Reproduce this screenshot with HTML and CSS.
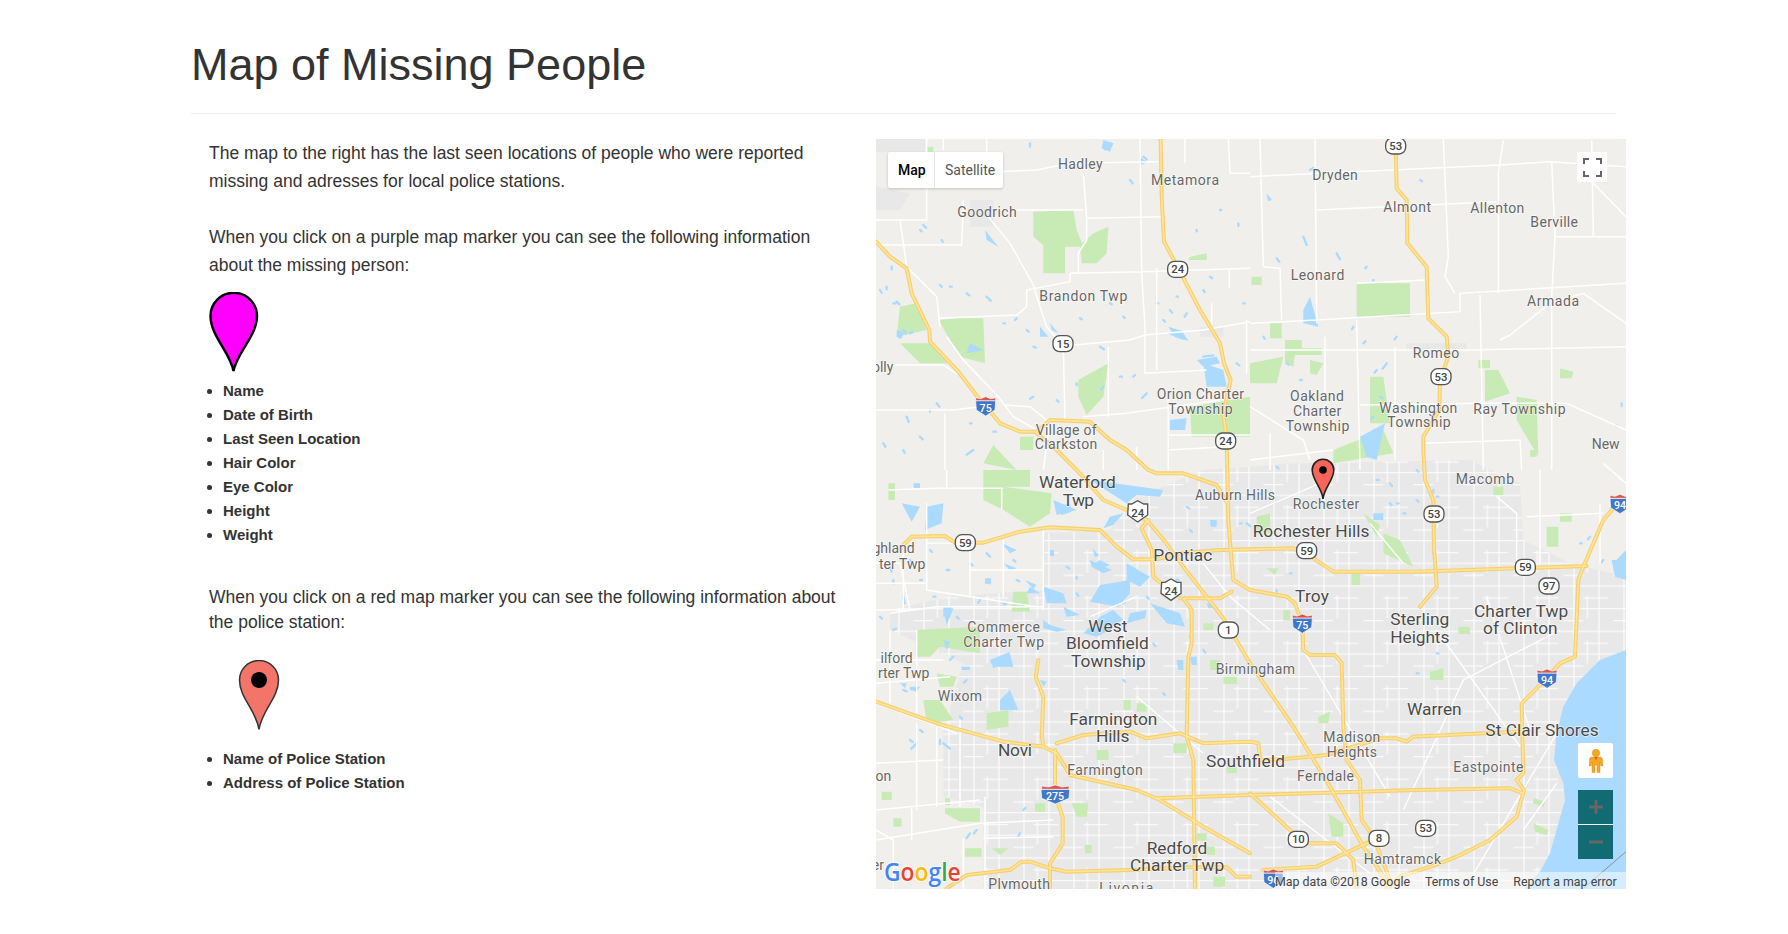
FILE: index.html
```html
<!DOCTYPE html>
<html lang="en">
<head>
<meta charset="utf-8">
<title>Map of Missing People</title>
<link rel="stylesheet" href="styles.css">
</head>
<body>
<header class="page-header"><h1>Map of Missing People</h1></header>
<main class="row">
<section class="intro">
<p class="para">The map to the right has the last seen locations of people who were reported missing and adresses for local police stations.</p>
<p class="para para-next">When you click on a purple map marker you can see the following information about the missing person:</p>
<svg class="pin-purple" viewBox="0 0 50 80"><path d="M24.500 79C21 60 1.500 44 1.500 24A23 23 0 0 1 48 24C48 44 28 60 24.500 79Z"/></svg>
<ul class="facts">
<li>Name</li><li>Date of Birth</li><li>Last Seen Location</li><li>Hair Color</li><li>Eye Color</li><li>Height</li><li>Weight</li>
</ul>
<p class="para para-tight">When you click on a red map marker you can see the following information about the police station:</p>
<svg class="pin-red" viewBox="0 0 42 70"><path class="pin-body" d="M21 69.500C18 50 1.500 38 1.500 20A19.500 19.500 0 0 1 40.500 20C40.500 38 24 50 21 69.500Z"/><circle cx="21" cy="20" r="8"/></svg>
<ul class="facts facts-police"><li>Name of Police Station</li><li>Address of Police Station</li></ul>
</section>
<section class="map">
<svg class="map-art" viewBox="18 27 2250 2250">
<defs>
<filter id="soft"><feGaussianBlur stdDeviation="1.600"/></filter>
<pattern id="grid" width="75" height="68" patternUnits="userSpaceOnUse"><path d="M0 8H75M12 0V68" class="grid-line"/></pattern>
<pattern id="grid2" width="150" height="136" patternUnits="userSpaceOnUse" x="40" y="36"><path d="M0 8H75M12 0V68M90 76H150" class="grid-line"/></pattern>
<clipPath id="urban-clip"><path id="urban-shape" d="M520 1210L720 1200 800 1100 1000 1020 1280 1000 1800 990 1950 1060 1960 1230 2100 1300 2268 1340V2280H340V2030L220 2000V1800L280 1600 60 1500V1440L230 1400 520 1380Z"/></clipPath>
<g id="highways">
<path d="M872 27L875 200 882 335 925 415 990 540 1050 640 1062 700 1082 750 1060 850 1070 933 1072 1020 1075 1170 1082 1260 1090 1350 1140 1380 1250 1400 1275 1420 1297 1480 1300 1560 1320 1575 1395 1575 1415 1600 1420 1790 1430 1890 1470 1950 1475 2070 1510 2120 1560 2250"/>
<path d="M1577 48L1580 175 1610 210 1612 340 1670 410 1675 565 1730 620 1735 680 1710 750 1708 840 1660 920 1660 960 1665 1050 1690 1110 1692 1260 1695 1290 1700 1370 1650 1430"/>
<path d="M18 335L60 380 110 415 125 490 178 600 180 635 265 725 330 810 347 828 390 880 450 905 500 905 540 870 660 875 720 930 770 960 835 1020 860 1030 940 1030 1040 1065 1072 1120"/>
<path d="M495 905L560 960 620 1020 700 1110 770 1140 830 1170 885 1235 940 1310 1060 1465 1140 1600 1270 1790 1380 1970 1480 2150 1560 2270"/>
<path d="M100 1245L125 1220 225 1218 255 1238 340 1238 400 1220 450 1205 540 1192 690 1200 740 1250 790 1288 860 1288 930 1270 1050 1260 1140 1258 1270 1255 1330 1285 1390 1325 1640 1325 1940 1315 2150 1308"/>
<path d="M835 1170L815 1195 845 1260 850 1340 880 1365M930 1405L1050 1405 1085 1385M940 1405L965 1440 965 1540 955 1580 950 1820 970 1890 975 2277"/>
<path d="M505 1590L497 1640 520 1700 515 1820 520 1845M555 1860L555 1995 578 2060 578 2140 540 2200 540 2277"/>
<path d="M18 1715L200 1780 400 1835 520 1850 560 1870 600 1935 800 1980 870 2010 1000 2090 1140 2170"/>
<path d="M560 1840L640 1815 780 1805 830 1825 930 1810 1000 1840 1140 1835 1165 1840 1170 1890 1245 1887 1370 1875 1530 1825 1580 1825 1610 1835 1630 1820 1840 1810 1960 1805"/>
<path d="M860 2005L1140 1995 1640 1980 1920 1975 1960 1990"/>
<path d="M2230 1135L2200 1170 2140 1310 2125 1350 2115 1580 2070 1600 2030 1645 1955 1720 1960 1930 1940 1950 1962 1980 1940 2060 1860 2130 1760 2180 1710 2200 1590 2240 1550 2275"/>
<path d="M1140 1990L1260 2100 1315 2140 1400 2140 1450 2190 1460 2275M1180 2220L1340 2210 1500 2135"/>
<path d="M230 2275L290 2235 420 2220 455 2195 480 2195 540 2215 590 2225 780 2220 970 2212 1070 2212 1100 2240 1140 2240"/>
</g>
</defs>
<g filter="url(#soft)">
<rect class="land" x="18" y="27" width="2250" height="2250"/>
<use href="#urban-shape" class="urban"/>
<rect x="18" y="27" width="2250" height="2250" fill="url(#grid)" clip-path="url(#urban-clip)"/>
<rect x="18" y="27" width="2250" height="2250" fill="url(#grid2)" clip-path="url(#urban-clip)"/>
<path class="urban" d="M18 27H165V65H18ZM18 170L120 190 90 240 18 240ZM300 210H370V290H300ZM990 590H1060V620H990ZM1610 640H1790V660H1610Z"/>
<g class="green">
<path d="M490 245L610 240 620 300 640 350 585 350 585 430 520 430 520 345 490 320ZM630 345L670 310 715 290 710 370 680 400 635 400ZM260 565H340L345 700 270 680 205 570ZM90 530L140 520 170 600 80 620ZM90 640H180L240 700 150 700ZM625 750L715 700 700 800 650 855 625 800ZM960 380L1010 370V390H955ZM960 830L1140 800V920H965ZM450 920H490V960H450ZM340 1000L370 945 440 1020ZM170 50H190V65H170Z"/>
<path d="M1460 460H1620V560H1460ZM1245 630H1295V655H1355V675H1275L1270 710 1245 700ZM1140 700L1240 680 1220 760H1140ZM1500 740H1540L1560 880H1500ZM1845 720H1885L1920 790 1845 815ZM1940 800L2000 810 2005 980 1940 870ZM1390 960L1540 900 1570 970 1390 1000ZM2070 715L2110 725 2105 745H2070ZM1200 580H1235V625H1200ZM1145 440H1175V465H1145ZM1320 690L1360 700 1340 735 1320 730ZM1825 690H1860V715H1825Z"/>
<path d="M340 1020H480V1070H400L545 1090 540 1150 480 1190 400 1140 340 1110ZM430 1385H470L480 1445H425ZM140 1500L330 1490V1570L210 1550 180 1580H140ZM200 1630L260 1640 250 1670H210ZM160 1710H210L250 1770 170 1780ZM350 1750L415 1740V1790L350 1800ZM55 1060H75V1110H55Z"/>
<path d="M1540 1210L1590 1230 1630 1310 1540 1270ZM2070 1150H2105V1175H2070ZM2030 1190H2065V1250H2030ZM1870 1070H1900V1095H1870ZM1980 960H2000V980H1980ZM1160 1160L1200 1150V1210H1160ZM1480 1150L1530 1185 1520 1220Z"/>
<path d="M1680 1625L1720 1615V1650H1680ZM1765 1490H1800V1512H1765ZM1990 2080L2035 2100 2030 2115 1995 2105ZM1990 2005L2025 2015 2020 2030 1990 2020ZM1345 1760L1380 1745 1375 1780H1345ZM1375 2050L1420 2080V2120H1385ZM1445 1330H1470V1365H1445ZM1190 1315H1225L1215 1335Z"/>
<path d="M225 2035H330V2075H270L225 2050ZM70 2065H95V2090H70ZM645 2145H665V2170H645ZM605 2020H655L650 2060H620ZM285 2155H335V2180H285ZM365 2155H415L390 2175ZM495 2020H525V2045H495ZM35 1985H65V2010H35ZM225 2005H240V2025H225Z"/>
<path d="M1000 1480h30v20h-30ZM1060 1640h40v22h-40ZM1240 1440h20v30h-20ZM1020 1590h30v30h-30ZM800 1720h30v25h-30ZM680 1860h35v30h-35ZM910 1840h40v30h-40ZM760 1710h22v30h-22ZM1010 2150h25v25h-25ZM980 2110h30v22h-30ZM1030 2240h35v30h-35ZM1070 1910h30v20h-30Z"/>
</g>
<g class="water">
<path d="M520 1370L580 1390 590 1420H530ZM660 1290L725 1320 700 1330 665 1310ZM770 1300L840 1340 810 1370 770 1350ZM690 1365L780 1350V1390L745 1430 660 1415ZM580 1430L630 1455 590 1460ZM730 1440L760 1470 700 1500 640 1510 690 1460ZM780 1450L830 1440 825 1465 770 1480ZM840 1420L930 1450 945 1490 890 1480ZM390 1710L420 1680 445 1740H390ZM365 1590L420 1570 430 1610 380 1610ZM480 1370L510 1390H470ZM170 1130L220 1120 215 1180 165 1200ZM95 1120L150 1130 125 1175ZM395 1240L440 1260 420 1270ZM550 1110L620 1140 560 1155ZM660 1050L880 1080 870 1100 800 1095 770 1120ZM220 1440L250 1435 230 1485Z"/>
<path d="M540 1260h12v18h-12ZM668 1255l20 22-14 4ZM690 1290l30 15-25 10-20-15ZM400 1300l40 15-20 6ZM465 1350l35 15-10 12ZM345 1345h18v16h-18ZM520 1470l20 15 50 15-30 5-40-10ZM640 1510l60-20 30 5-50 25ZM360 1590l60-25-10 30-40 20ZM275 1610h25v10h-25ZM510 1650l20 5-10 15ZM920 1590h20v30h-15ZM960 1580h20v25h-15ZM1010 1420h20v15h-15ZM1020 1170h20v20h-18ZM720 1160l40-10-30 35-30 10ZM560 1130l40-10 5 25-30 10ZM130 1060h20v15h-18ZM220 1530l20 5-10 25ZM90 1660h20l-5 15ZM120 1670h30l-10 15-20-5ZM220 1430h25l-5 30h-20Z"/>
<path d="M345 300L385 350 350 330ZM510 590L535 620H510ZM540 580L565 610 545 600ZM1000 700L1060 720 1070 770H1010ZM900 870L950 865 945 900H900ZM300 640L340 660 290 670ZM1300 540L1320 500 1345 590 1300 580ZM1470 920L1545 880 1520 990 1490 980ZM1510 1150H1540V1170H1510ZM895 590l40 12 20 30-40-10ZM980 690l60-10 10 20-50 10ZM700 30l30 10-10 25-25-10ZM810 80l20 15-15 10ZM1190 190l16 20-12 4ZM80 600l22 8-10 20-12-8Z"/>
<path class="specks" d="M480 40v10M720 40l-15 18M820 80l10 8M780 150l8 10M1050 240h4M160 285l8 8M215 330l3 5M65 410v8M210 465l5 5M50 470v8M350 500l12 12M80 515l8 8M630 565l5 3M440 565l-5 5M490 650l8 3M690 650l12 8M100 600l8 10M120 610l8-4M200 820l8 10M490 800l-10 6M830 790l-14 14M790 740l5-5M750 740h6M700 770l-6 8M40 940l6 10M110 860l6 16M310 960l-20 14M370 905h8M900 610l40 16M1000 680l30-4M900 540l6 8M950 550l-6 10M1100 700l8 6M1020 440l6 4M1105 280v8M980 300v4M1300 320l10 25M1400 370l10 18M1220 385l8 10M1320 120l10-6M1490 410l-4 5M1510 450v4M1450 590l-4 8M1550 700l-12 16M1580 620l-6 8M1650 150l6 4M2255 820v8M2235 885l8 3M1560 1060l6 8M1640 1110l5 5M1690 1080v8M1130 1180l10 8M60 1310l5 15M100 1400l4 20M230 1320h8M350 1350l8 10M440 1350l8 4M360 1500l8 6M250 1580l-10 10M100 1680l10 4M140 1840l-16 16M220 1840l20 16M210 1830v12M300 2110l-10 14M320 2100l-8 10M460 2040l6-6M450 2110l-6 10M1640 1630h6M1700 1570h6"/>
<path class="specks" d="M30 480l5 8M70 520h6M150 300l5 4M240 470h5M290 490l8 6M400 580h5M470 600l6 5M300 880h5M150 920l8 8M100 960l4 8M180 840v5M620 760v6M560 810l5 5M760 560l4 4M720 520l5 3M860 520h5M880 570l5 5M920 500h4M1000 480l4 6M1120 520h5M1180 620l4 6M1250 700l6 4M1290 750h6M1480 640l6-6M1520 720l-6 8M1530 800l8 4M1510 860l-6 6M1640 1020l5 5M1700 1100h5M1520 1050h6M1560 1120l5 5M1600 1150h6M1220 1010l5 5M1170 1090l6 4M1110 1180h5M950 1130l8 6M960 1200l6 6M120 1290l8 8M180 1260l6 6M300 1300l8 6M350 1270l10 10M430 1290l6 5M70 1350v10M150 1350h6M190 1400h6M260 1460l6 6M330 1410l-5 8M400 1420l8 3M440 1420h6M30 1460l6 6M70 1500l8-4M320 1690l8 4M290 1650l-8 8M620 1340v6M620 1390l5 8M590 1310l8 6M900 1360l8 4M830 1400l6 6M760 1420l6-4M920 1350h6M850 1540l6 8M960 1520l5 6M1000 1560l6 8M800 1620h6M760 1650l5 5M880 1690l5 5M1220 1380v5M1260 1330h5M1580 1120h6M2160 1220l-6 8M2130 1240h5M2200 1290l-5 6M150 1800l8 6M190 1780l8 6M120 1830l8 6M270 1760l6 6"/>
</g>
<path class="rural" d="M18 345H275L280 210M170 27V270H18M380 125L500 120 600 100 865 95M380 240H640M650 265L880 260M640 130L650 265V330L625 370V430M355 260L420 340 490 465 510 530 530 590 560 625 580 640M580 660L585 870M600 430V455L470 480V530L440 555 205 565M600 430L815 425 1140 415M810 27L815 430 825 590V730L1010 720M610 645L780 630 825 615 1000 600 1140 575M715 650V860M18 705H220L265 735M230 620L280 690 385 800 430 860 500 900M90 270L110 410 200 500 210 590M18 840H250L330 830M225 850V1020M400 825L480 830 530 870M640 860L770 850 1050 810M945 27V100M1075 27L1080 130H1140M860 415V720M1025 520V600M1078 415V475M220 27V60M350 27V125M800 950V1020M895 800V1020M700 1020V960M895 915H1140M895 960L1070 950M1130 570V730M540 870L520 1020"/>
<path class="rural" d="M1170 27L1180 410M1335 27L1340 580M1140 140L1890 105 2040 95 2268 110M1340 240L1880 215M1180 410L1230 415 1235 570M1140 580L1340 570 1770 545V490L2268 460M1720 27L1735 380 1725 440 1755 490M1885 215V490M1900 30L1885 130V215M2045 95L2055 320 2045 500V1020M2055 320H2268M2165 30L2170 320M2170 160L2268 260M1830 495L1840 1020M1460 460L1670 450M1890 630L1920 615 2040 520 2140 490 2268 580M1140 660H1800L2268 650M1365 620V800M1460 570L1470 1020M1575 650V990M1140 830L1300 930 1320 990M1470 825L1840 820 2090 820 2268 900M1660 940L1950 930 1955 1020M1200 910V1020M1140 990L1390 960"/>
<path class="rural" d="M55 1080L200 1075H400M170 1120V1380L500 1430M230 1020V1075M395 1075V1140M520 1200V1440M60 1450L200 1430H520M18 1720L260 1810M18 1440H120M270 1770V2030M18 2040L330 2010M18 2130L330 2080 550 2070M18 2100L70 2130V2277M125 2035V2130M18 1300L90 1300 120 1440M280 2125V2277M345 2000V2277M340 2125L550 2120M1970 1160L2200 1150M2010 1020V1300M2190 1120V1300M1880 1100L1940 1150V1300M2200 1000L2268 1060M100 1270V1440M300 1240V1400M400 1230V1400M170 1240H300M18 1360H170M300 1320H520M60 1500V1720M140 1500V1750M18 1590H220M18 1660L240 1640M140 1780V2040M200 1790V2030M18 1900L220 1890"/>
<path class="diag" d="M1140 1150L1350 1060 1400 1020M1500 1180L1600 1300M1850 1400L1980 1800M1700 1500L1950 1850M1600 2040L1780 1650 2070 1500M1800 2250L2060 1810M1960 2100L2060 1960M1300 1560L1560 2000M1200 2000L1500 2230M1200 1500L1080 1400 1000 1300M800 1700L1000 1870M800 1400L660 1460"/>
<path class="lake" d="M2268 1560L2190 1590 2120 1660 2080 1730 2060 1810 2052 1890 2080 1960 2085 2010 2040 2170 2010 2225 1960 2280H2268ZM2225 1290L2235 1340 2268 1350V1290ZM2268 1260L2230 1300 2240 1320 2268 1320Z"/>
<use href="#highways" class="hw-case"/>
<use href="#highways" class="hw-core"/>
</g>

<g class="labels">
<text x="564" y="118" textLength="134">Hadley</text>
<text x="843" y="166" textLength="204">Metamora</text>
<text x="262" y="260" textLength="178">Goodrich</text>
<text x="508" y="512" textLength="264">Brandon Twp</text>
<text x="70" y="725" text-anchor="end">olly</text>
<text x="860" y="807" textLength="262">Orion Charter</text>
<text x="895" y="852" textLength="193">Township</text>
<text x="497" y="914" textLength="183">Village of</text>
<text x="494" y="958" textLength="188">Clarkston</text>
<text x="1327" y="150" textLength="136">Dryden</text>
<text x="1540" y="246" textLength="143">Almont</text>
<text x="1801" y="250" textLength="162">Allenton</text>
<text x="1981" y="290" textLength="143">Berville</text>
<text x="1262" y="450" textLength="161">Leonard</text>
<text x="1971" y="528" textLength="156">Armada</text>
<text x="1628" y="684" textLength="140">Romeo</text>
<text x="1260" y="812" textLength="162">Oakland</text>
<text x="1269" y="857" textLength="145">Charter</text>
<text x="1247" y="902" textLength="191">Township</text>
<text x="1528" y="848" textLength="234">Washington</text>
<text x="1552" y="892" textLength="190">Township</text>
<text x="1810" y="852" textLength="277">Ray Township</text>
<text x="2165" y="956">New</text>
<text x="1757" y="1062" textLength="175">Macomb</text>
<text x="1268" y="1136" textLength="200">Rochester</text>
<text x="975" y="1110" textLength="240">Auburn Hills</text>
<text x="134" y="1270" text-anchor="end">ghland</text>
<text x="166" y="1317" text-anchor="end">ter Twp</text>
<text x="292" y="1507" textLength="218">Commerce</text>
<text x="280" y="1552" textLength="242">Charter Twp</text>
<text x="1037" y="1632" textLength="238">Birmingham</text>
<text x="128" y="1600" text-anchor="end">ilford</text>
<text x="178" y="1644" text-anchor="end">rter Twp</text>
<text x="203" y="1714" textLength="133">Wixom</text>
<text x="592" y="1936" textLength="226">Farmington</text>
<text x="64" y="1952" text-anchor="end">on</text>
<text x="1360" y="1836" textLength="171">Madison</text>
<text x="1370" y="1882" textLength="151">Heights</text>
<text x="1281" y="1953" textLength="171">Ferndale</text>
<text x="1750" y="1926" textLength="210">Eastpointe</text>
<text x="1481" y="2202" textLength="232">Hamtramck</text>
<text x="355" y="2278" textLength="185">Plymouth</text>
<text x="688" y="2290" textLength="162">Livonia</text>
<text x="42" y="2220" text-anchor="end">er</text>
</g>
<g class="labels labels-big">
<text x="507" y="1075" textLength="230">Waterford</text>
<text x="578" y="1128" textLength="94">Twp</text>
<text x="850" y="1293" textLength="177">Pontiac</text>
<text x="1148" y="1220" textLength="350">Rochester Hills</text>
<text x="655" y="1505" textLength="117">West</text>
<text x="588" y="1558" textLength="248">Bloomfield</text>
<text x="603" y="1610" textLength="224">Township</text>
<text x="598" y="1785" textLength="264">Farmington</text>
<text x="678" y="1837" textLength="100">Hills</text>
<text x="384" y="1878" textLength="102">Novi</text>
<text x="1008" y="1910" textLength="237">Southfield</text>
<text x="830" y="2172" textLength="182">Redford</text>
<text x="780" y="2224" textLength="283">Charter Twp</text>
<text x="1275" y="1415" textLength="102">Troy</text>
<text x="1561" y="1485" textLength="177">Sterling</text>
<text x="1561" y="1538" textLength="177">Heights</text>
<text x="1812" y="1460" textLength="283">Charter Twp</text>
<text x="1839" y="1513" textLength="224">of Clinton</text>
<text x="1611" y="1756" textLength="164">Warren</text>
<text x="1846" y="1818" textLength="340">St Clair Shores</text>
</g>

<g class="shields">
<g class="state"><rect x="893" y="394" width="60" height="48" rx="20"/><text x="923" y="430">24</text></g>
<g class="state"><rect x="549" y="617" width="60" height="48" rx="20"/><text x="579" y="653">15</text></g>
<g class="state"><rect x="1037" y="909" width="60" height="48" rx="20"/><text x="1067" y="945">24</text></g>
<g class="state"><rect x="1547" y="24" width="60" height="48" rx="20"/><text x="1577" y="60">53</text></g>
<g class="state"><rect x="1683" y="716" width="60" height="48" rx="20"/><text x="1713" y="752">53</text></g>
<g class="state"><rect x="1662" y="1128" width="60" height="48" rx="20"/><text x="1692" y="1164">53</text></g>
<g class="state"><rect x="1280" y="1238" width="60" height="48" rx="20"/><text x="1310" y="1274">59</text></g>
<g class="state"><rect x="1936" y="1288" width="60" height="48" rx="20"/><text x="1966" y="1324">59</text></g>
<g class="state"><rect x="256" y="1214" width="60" height="48" rx="20"/><text x="286" y="1250">59</text></g>
<g class="state"><rect x="1045" y="1476" width="60" height="48" rx="20"/><text x="1075" y="1512">1</text></g>
<g class="state"><rect x="2007" y="1344" width="60" height="48" rx="20"/><text x="2037" y="1380">97</text></g>
<g class="state"><rect x="1255" y="2104" width="60" height="48" rx="20"/><text x="1285" y="2140">10</text></g>
<g class="state"><rect x="1497" y="2101" width="60" height="48" rx="20"/><text x="1527" y="2137">8</text></g>
<g class="state"><rect x="1637" y="2071" width="60" height="48" rx="20"/><text x="1667" y="2107">53</text></g>
<g class="state"><path d="M775 1122L785 1122 803 1112 821 1122 833 1122 833 1155 803 1176 773 1155Z"/><text x="803" y="1160">24</text></g>
<g class="state"><path d="M875 1357L885 1357 903 1347 921 1357 933 1357 933 1390 903 1411 873 1390Z"/><text x="903" y="1395">24</text></g>
<g class="inter"><path class="i-blue" d="M317 812H377L375 840 347 858 319 840Z"/><path class="i-red" d="M317 812L317 803 332 806 347 800 362 806 377 803V812Z"/><text x="347" y="845">75</text></g>
<g class="inter"><path class="i-blue" d="M513 1978H599L597 2005 556 2022 515 2005Z"/><path class="i-red" d="M515 1978V1968L535 1971 556 1965 577 1971 597 1968V1978Z"/><text x="555" y="2011">275</text></g>
<g class="inter"><path class="i-blue" d="M1267 1464H1327L1325 1492 1297 1510 1269 1492Z"/><path class="i-red" d="M1267 1464V1455L1282 1458 1297 1452 1312 1458 1327 1455V1464Z"/><text x="1297" y="1497">75</text></g>
<g class="inter"><path class="i-blue" d="M2001 1629H2061L2059 1657 2031 1675 2003 1657Z"/><path class="i-red" d="M2001 1629V1620L2016 1623 2031 1617 2046 1623 2061 1620V1629Z"/><text x="2031" y="1662">94</text></g>
<g class="inter"><path class="i-blue" d="M2220 1105H2280L2278 1133 2250 1151 2222 1133Z"/><path class="i-red" d="M2220 1105V1096L2235 1099 2250 1093 2265 1099 2280 1096V1105Z"/><text x="2250" y="1138">94</text></g>
<g class="inter"><path class="i-blue" d="M1180 2229H1240L1238 2257 1210 2275 1182 2257Z"/><path class="i-red" d="M1180 2229V2220L1195 2223 1210 2217 1225 2223 1240 2220V2229Z"/><text x="1210" y="2262">96</text></g>
</g>
<g class="google">
<text x="42" y="2252" textLength="230" lengthAdjust="spacingAndGlyphs"><tspan class="g-b">G</tspan><tspan class="g-r">o</tspan><tspan class="g-y">o</tspan><tspan class="g-b">g</tspan><tspan class="g-g">l</tspan><tspan class="g-r">e</tspan></text>
</g>
<path class="cable" d="M2268 2165L2140 2275"/>
</svg>

<svg class="marker" viewBox="0 0 24 42"><path d="M12 41C11 30 1.200 22 1.200 12A10.800 10.800 0 0 1 22.800 12C22.800 22 13 30 12 41Z"/><circle cx="12" cy="12" r="3.800"/></svg>

<div class="map-type">
<span class="type-btn type-active">Map</span><span class="type-btn">Satellite</span>
</div>
<div class="fullscreen"><svg viewBox="0 0 19 19" class="fs-icon"><path d="M1 6V1H6M13 1H18V6M18 13V18H13M6 18H1V13"/></svg></div>
<div class="pegman"><svg viewBox="0 0 14 24" class="peg-icon"><circle class="peg" cx="7" cy="4" r="3.800"/><path class="peg" d="M3 8H11C12.500 8 13.500 9 13.500 10.500L14 17H12L11 13V23.500H8V16H6V23.500H3V13L2 17H0L.5 10.500C.5 9 1.500 8 3 8Z"/><path class="peg-tie" d="M5.500 8H8.500L7 11.500Z"/></svg></div>
<div class="zoom-ctl">
<div class="zoom-btn"><svg viewBox="0 0 14 14" class="zoom-icon"><path d="M7 0V14M0 7H14"/></svg></div>
<div class="zoom-btn"><svg viewBox="0 0 14 14" class="zoom-icon"><path d="M0 7H14"/></svg></div>
</div>
<div class="attribution"><span>Map data ©2018 Google</span><span>Terms of Use</span><span>Report a map error</span></div>
</section>
</main>
</body>
</html>
```
FILE: styles.css
```css
* { box-sizing: border-box; }
html, body { margin: 0; padding: 0; background: #fff; }
body { font-family: "Liberation Sans", Arial, sans-serif; color: #333; height: 934px; overflow: hidden; }

.page-header { margin-left: 191px; width: 1425px; height: 114px; border-bottom: 1px solid #eee; padding-top: 40px; }
h1 { margin: 0; font-size: 45px; line-height: 50px; font-weight: 400; color: #333; }

.row { display: flex; margin-top: 25px; padding-left: 209px; }
.intro { width: 667px; flex: none; padding-right: 22px; }
.para { margin: 0; font-size: 17.500px; line-height: 28px; }
.para-next { margin-top: 28px; }
.para-tight { margin-top: 38px; line-height: 25px; }

.pin-purple { display: block; width: 50px; height: 80px; margin-top: 13px; }
.pin-purple path { fill: #f0f; stroke: #000; stroke-width: 2.400; }
.pin-red { display: block; width: 42px; height: 70px; margin: 25px 0 0 29px; }
.pin-body { fill: #f37468; stroke: #333; stroke-width: 1.500; }

.facts { margin: 7px 0 0; padding: 0 0 0 14px; font-size: 15px; font-weight: 700; line-height: 24px; }
.facts-police { margin-top: 17px; }

.map { position: relative; width: 750px; height: 750px; flex: none; overflow: hidden; font-family: Roboto, sans-serif; }
.map-art { display: block; width: 750px; height: 750px; }

.land { fill: #f0efeb; }
.urban { fill: #e8e8e8; }
.grid-line { fill: none; stroke: #fff; stroke-width: 3; }
.green path { fill: #c8eab4; }
.water path, .lake { fill: #aadaff; }
.water .specks { fill: none; stroke: #aadaff; stroke-width: 7; stroke-linecap: round; }
.rural { fill: none; stroke: #fff; stroke-width: 4.500; }
.diag { fill: none; stroke: #fff; stroke-width: 4; }
.cable { fill: none; stroke: #8f8f8f; stroke-width: 3; }
.hw-case, .hw-core { fill: none; stroke-linejoin: round; stroke-linecap: round; }
.hw-case { stroke: #f8cf6b; stroke-width: 12; }
.hw-core { stroke: #fde49c; stroke-width: 5; }

.labels text { font-family: Roboto, sans-serif; font-size: 42px; fill: #666; stroke: #fff; stroke-width: 4px; stroke-opacity: .7; paint-order: stroke; }
.labels-big text { font-size: 52px; fill: #4a4a4a; }

.state rect, .state path { fill: #fff; stroke: #555; stroke-width: 4; }
.state text { font-family: Roboto, sans-serif; font-size: 34px; font-weight: 500; fill: #444; text-anchor: middle; }
.i-blue { fill: #3f78c8; stroke: #fff; stroke-width: 2; }
.i-red { fill: #d9574f; stroke: #fff; stroke-width: 2; }
.inter text { font-family: Roboto, sans-serif; font-size: 32px; font-weight: 500; fill: #fff; text-anchor: middle; }

.google text { font-family: "Open Sans", sans-serif; font-size: 78px; font-weight: 600; stroke: #fff; stroke-width: 6px; stroke-opacity: .8; paint-order: stroke; }
.g-b { fill: #4285f4; }
.g-r { fill: #ea4335; }
.g-y { fill: #fbbc05; }
.g-g { fill: #34a853; }

.marker { position: absolute; left: 435px; top: 319px; width: 24px; height: 42px; }
.marker path { fill: #f7645a; stroke: #222; stroke-width: 1.600; }

.map-type { position: absolute; left: 12px; top: 13px; display: flex; height: 36px; background: #fff; border-radius: 2px; box-shadow: 0 1px 3px rgba(0,0,0,.2); font-size: 14px; }
.type-btn { display: flex; align-items: center; padding: 0 8px 0 10px; color: #565656; }
.type-active { width: 47px; padding: 0 0 0 10px; color: #000; font-weight: 500; border-right: 1px solid #e6e6e6; }

.fullscreen { position: absolute; left: 701px; top: 13px; width: 30px; height: 30px; background: #fff; display: flex; align-items: center; justify-content: center; }
.fs-icon { width: 19px; height: 19px; fill: none; stroke: #666; stroke-width: 2; }

.pegman { position: absolute; left: 702px; top: 604px; width: 35px; height: 35px; background: #fff; border-radius: 2px; display: flex; align-items: center; justify-content: center; }
.peg-icon { width: 14px; height: 24px; }
.peg { fill: #f5a623; stroke: #c98a10; stroke-width: .4; }
.peg-tie { fill: #d9552c; }

.zoom-ctl { position: absolute; left: 702px; top: 651px; width: 35px; height: 69px; display: flex; flex-direction: column; gap: 1px; background: #fff; }
.zoom-btn { flex: 1; background: #126b73; display: flex; align-items: center; justify-content: center; }
.zoom-icon { width: 14px; height: 14px; fill: none; stroke: #666; stroke-width: 3; }

.attribution { position: absolute; left: 399px; right: 0; bottom: 0; height: 17px; display: flex; gap: 15px; padding-top: 1px; align-items: center; background: rgba(255,255,255,.5); font-size: 12.400px; color: #444; white-space: nowrap; }
```
